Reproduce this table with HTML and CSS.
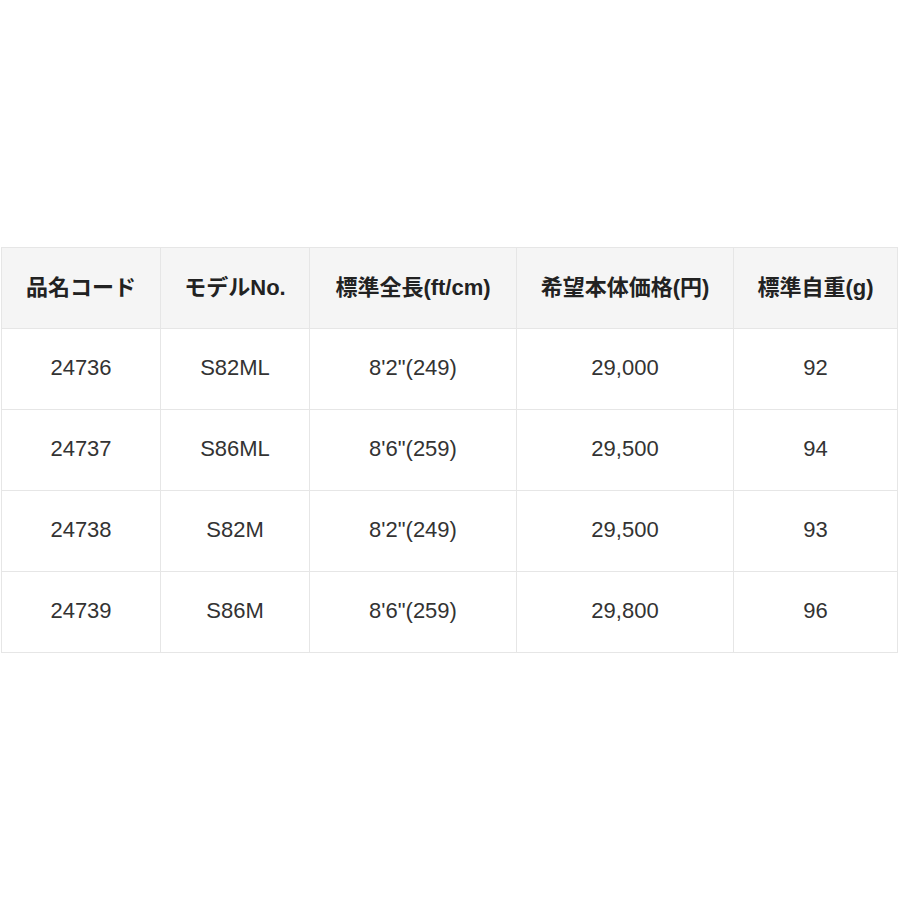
FILE: index.html
```html
<!DOCTYPE html>
<html lang="ja">
<head>
<meta charset="utf-8">
<link rel="stylesheet" href="styles.css">
</head>
<body>
<div class="wrap">
<table class="spec">
<thead>
<tr>
<th class="c1">品名コード</th>
<th class="c2">モデルNo.</th>
<th class="c3">標準全長(ft/cm)</th>
<th class="c4">希望本体価格(円)</th>
<th class="c5">標準自重(g)</th>
</tr>
</thead>
<tbody>
<tr><td>24736</td><td>S82ML</td><td>8'2"(249)</td><td>29,000</td><td>92</td></tr>
<tr><td>24737</td><td>S86ML</td><td>8'6"(259)</td><td>29,500</td><td>94</td></tr>
<tr><td>24738</td><td>S82M</td><td>8'2"(249)</td><td>29,500</td><td>93</td></tr>
<tr><td>24739</td><td>S86M</td><td>8'6"(259)</td><td>29,800</td><td>96</td></tr>
</tbody>
</table>
</div>
</body>
</html>
```
FILE: styles.css
```css
html, body {
  margin: 0;
  padding: 0;
  background: #ffffff;
}
.wrap {
  padding: 247px 0 0 1px;
}
.spec {
  border-collapse: separate;
  border-spacing: 1px;
  background: #e6e6e6;
  table-layout: fixed;
  font-family: "Liberation Sans", "Noto Sans CJK JP", sans-serif;
  font-size: 22px;
  color: #333333;
}
.spec th, .spec td {
  padding: 0 0 2px 0;
  height: 80px;
  text-align: center;
  vertical-align: middle;
  background: #ffffff;
  box-sizing: border-box;
}
.spec th {
  padding-bottom: 6px;
  background: #f5f5f5;
  font-weight: bold;
  color: #222222;
}
.c1 { width: 158px; }
.c2 { width: 148px; }
.c3 { width: 206px; }
.c4 { width: 216px; }
.c5 { width: 163px; }
```
